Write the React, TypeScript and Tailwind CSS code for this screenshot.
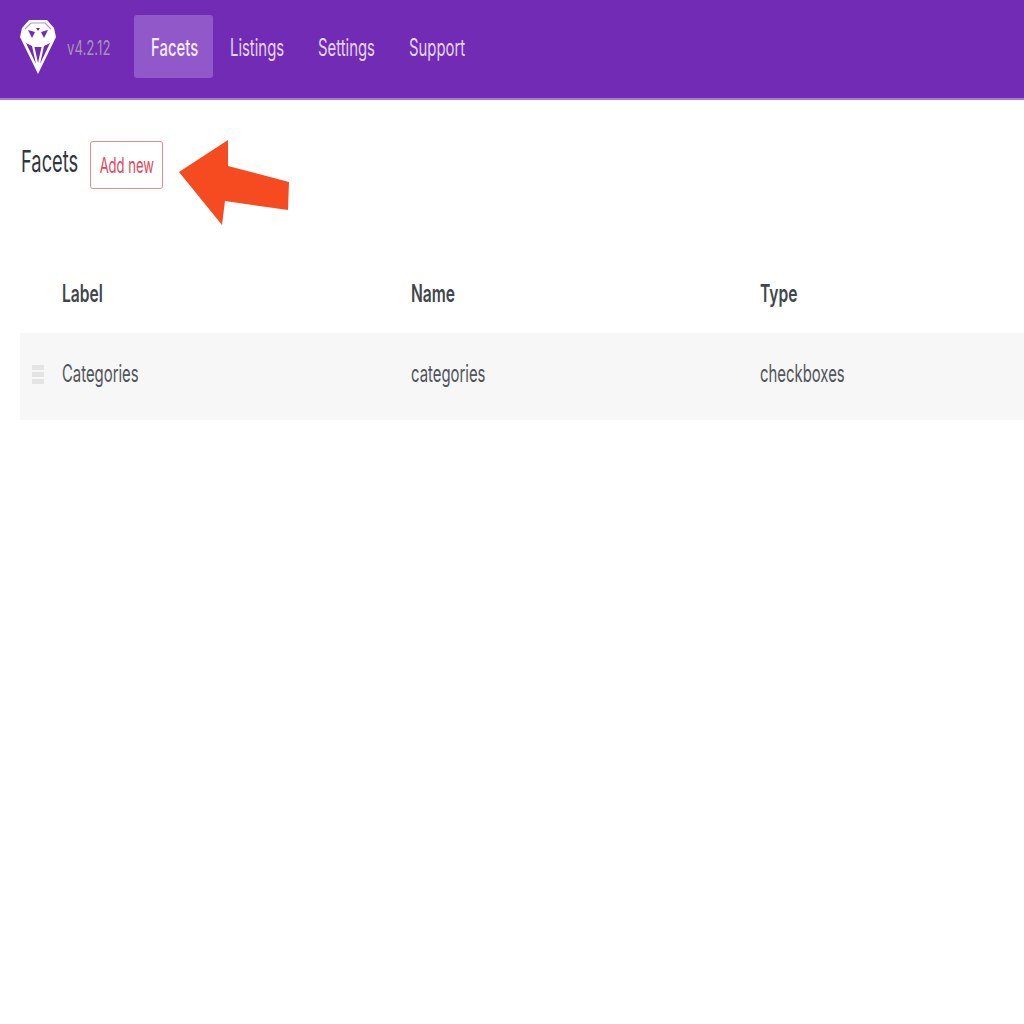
const font = "font-['Inter','Liberation_Sans',sans-serif]";

function Squeezed({ children, className = "scale-x-[0.62]" }: { children: React.ReactNode; className?: string }) {
  return <span className={`inline-block origin-left whitespace-nowrap ${className}`}>{children}</span>;
}

function Logo() {
  return (
    <svg width="36" height="54" viewBox="0 0 36 54" className="mt-[1px] shrink-0">
      <path fill="#fff" d="M9 0H27L34 8L36 17L18 54L0 17L2 8Z" />
      <path fill="none" stroke="#b792dc" strokeWidth="1.2" d="M5 9 11 3H25L31 9" />
      <path fill="#722bb5" d="M8 10 15 12 12 18ZM28 10 21 12 24 18ZM16 8H20L18 11ZM6 23 12 26 16 44ZM30 23 24 26 20 44ZM14.500 27H21.500L18 43Z" />
    </svg>
  );
}

function NavItem({ label, active }: { label: string; active?: boolean }) {
  return (
    <div className={`flex h-[63px] items-center rounded-[3px] pl-[17px] pt-[3px] text-[24px] ${active ? "w-[79px] bg-[#9158ca] font-medium text-[#f3ecfa]" : "font-normal text-[#e3d5f0]"}`}>
      <Squeezed>{label}</Squeezed>
    </div>
  );
}

export default function App() {
  return (
    <div className={`min-h-[1024px] bg-white ${font}`}>
      <header className="flex h-[100px] items-center border-b-2 border-[#a77ad6] bg-[#722bb5] pb-[6px] pl-[20px]">
        <Logo />
        <div className="ml-[11px] w-[67px] pt-[3px] text-[20px] text-[#a893b8]">
          <Squeezed className="scale-x-[0.66]">v4.2.12</Squeezed>
        </div>
        <nav className="flex">
          <NavItem label="Facets" active />
          <div className="w-[88px]"><NavItem label="Listings" /></div>
          <div className="w-[91px]"><NavItem label="Settings" /></div>
          <NavItem label="Support" />
        </nav>
      </header>

      <main className="px-[20px]">
        <div className="relative flex items-center pt-[37px]">
          <h1 className="w-[70px] pb-[8px] pl-[1px] text-[30px] font-normal leading-[48px] text-[#32373c]">
            <Squeezed className="scale-x-[0.61]">Facets</Squeezed>
          </h1>
          <button className="flex h-[48px] w-[73px] items-center justify-center rounded-[3px] border border-[#e98a93] pt-[1px] text-[21px] text-[#e0485a]">
            <span className="inline-block scale-x-[0.62] whitespace-nowrap">Add new</span>
          </button>
          <svg width="114" height="86" viewBox="0 0 114 86" className="absolute left-[158px] top-[40px]">
            <path fill="#f64b20" d="M50 0 1 32 44 85 47 61 110 70 111 42 50 26Z" />
          </svg>
        </div>

        <div className="mt-[76px] grid h-[50px] grid-cols-[349px_349px_1fr] items-center pl-[42px] text-[24px] font-semibold text-[#41464c]">
          <Squeezed className="scale-x-[0.65]">Label</Squeezed>
          <Squeezed className="scale-x-[0.65]">Name</Squeezed>
          <Squeezed className="scale-x-[0.65]">Type</Squeezed>
        </div>

        <div className="-mr-[20px] mt-[14px] grid h-[87px] grid-cols-[42px_349px_349px_1fr] items-center bg-[#f7f7f7] pb-[5px] text-[24px] text-[#50555b]">
          <div className="flex flex-col gap-[2px] pl-[12px]">
            <div className="h-[5px] w-[12px] bg-[#e4e4e4]" />
            <div className="h-[5px] w-[12px] bg-[#e4e4e4]" />
            <div className="h-[5px] w-[12px] bg-[#e4e4e4]" />
          </div>
          <Squeezed>Categories</Squeezed>
          <Squeezed>categories</Squeezed>
          <Squeezed>checkboxes</Squeezed>
        </div>
      </main>
    </div>
  );
}
